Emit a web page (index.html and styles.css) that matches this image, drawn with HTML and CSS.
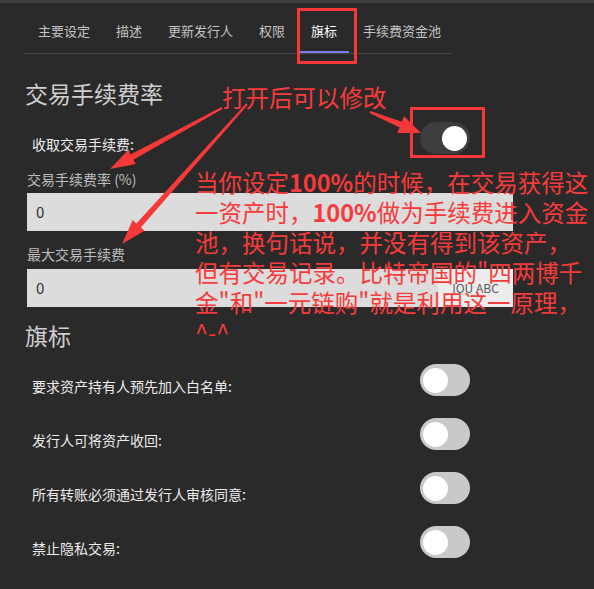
FILE: index.html
```html
<!DOCTYPE html>
<html lang="zh-CN">
<head>
    <meta charset="UTF-8">
    <title>资产设定 - 旗标</title>
    <link rel="stylesheet" href="styles.css">
</head>
<body>
    <div class="top-strip"></div>

    <div class="page">
        <!-- Tabs -->
        <div class="tabs">
            <span class="tab">主要设定</span>
            <span class="tab">描述</span>
            <span class="tab">更新发行人</span>
            <span class="tab">权限</span>
            <span class="tab active">旗标</span>
            <span class="tab">手续费资金池</span>
        </div>

        <!-- Transfer fee -->
        <h2 class="section-title">交易手续费率</h2>
        <div class="switch-row">
            <span class="switch-label">收取交易手续费:</span>
            <span class="switch on"><span class="knob"></span></span>
        </div>

        <label class="field-label first">交易手续费率 (%)</label>
        <div class="input-group">
            <div class="input-field">0</div>
        </div>

        <label class="field-label">最大交易手续费</label>
        <div class="input-group">
            <div class="input-field">0</div>
            <div class="input-addon">IOU ABC</div>
        </div>

        <!-- Flags -->
        <h2 class="section-title flags">旗标</h2>
        <div class="flag-list">
            <div class="switch-row">
                <span class="switch-label">要求资产持有人预先加入白名单:</span>
                <span class="switch"><span class="knob"></span></span>
            </div>
            <div class="switch-row">
                <span class="switch-label">发行人可将资产收回:</span>
                <span class="switch"><span class="knob"></span></span>
            </div>
            <div class="switch-row">
                <span class="switch-label">所有转账必须通过发行人审核同意:</span>
                <span class="switch"><span class="knob"></span></span>
            </div>
            <div class="switch-row">
                <span class="switch-label">禁止隐私交易:</span>
                <span class="switch"><span class="knob"></span></span>
            </div>
        </div>
    </div>

    <!-- Annotations drawn over the screenshot -->
    <div class="mark-box tab-mark"></div>
    <div class="mark-box switch-mark"></div>
    <div class="note note-open">打开后可以修改</div>
    <div class="note note-explain">当你设定<b>100%</b>的时候，在交易获得这<br>一资产时，<b>100%</b>做为手续费进入资金<br>池，换句话说，并没有得到该资产，<br>但有交易记录。比特帝国的"四两博千<br>金"和"一元链购"就是利用这一原理，<br>^-^</div>

    <svg class="arrows" width="594" height="589" viewBox="0 0 594 589">
        <polygon points="221.5,107.1 130.5,154.4 128.1,150.0 110,169 135.8,164.1 133.4,159.7 222.5,108.9"/>
        <polygon points="246.3,103.3 136.4,223.4 132.7,220.0 122,244 144.6,230.7 140.9,227.4 247.8,104.7"/>
        <polygon points="369.6,112.9 399.6,127.4 397.3,132.9 421,133 404.1,116.3 401.8,121.8 370.4,111.1"/>
    </svg>
</body>
</html>
```

FILE: styles.css
```css
:root {
    --bg: #2a2a2a;
    --mark-red: #f53838;
    --accent: #7d7bf0;
}

body {
    margin: 0;
    background: var(--bg);
    color: #e6e6e6;
    font-family: "Noto Sans CJK SC", "Noto Sans", sans-serif;
    font-size: 14px;
    width: 594px;
    height: 589px;
    overflow: hidden;
    position: relative;
}

.top-strip {
    height: 3px;
    background: #404040;
}

.page {
    padding: 0 81px 0 27px;
}

/* Tabs */
.tabs {
    display: flex;
    margin: 0 0 0 -4px;
    padding: 18px 0 0 2px;
    width: 427px;
    border-bottom: 1px solid #474747;
    white-space: nowrap;
}

.tab {
    flex-shrink: 0;
    padding: 0 13px 10px;
    font-size: 13px;
    line-height: 20px;
    color: #c4c4c4;
    border-bottom: 2px solid transparent;
}

.tab.active {
    padding: 0 12px 10px;
    margin: 0 1px 0 1px;
    color: #ffffff;
    border-bottom-color: var(--accent);
}

/* Sections */
.section-title {
    margin: 24px 0 0 -2px;
    font-size: 23px;
    line-height: 30px;
    font-weight: normal;
    color: #cfcfcf;
}

.section-title.flags {
    margin-top: 13px;
}

.switch-row {
    display: flex;
    justify-content: space-between;
    align-items: flex-end;
    width: 438px;
    margin-top: 14px;
    padding-left: 5px;
}

.switch-label {
    line-height: 20px;
    color: #ececec;
}

.switch {
    position: relative;
    width: 50px;
    height: 32px;
    border-radius: 16px;
    background: #c9c9c9;
}

.switch .knob {
    position: absolute;
    top: 4px;
    left: 3px;
    width: 25px;
    height: 25px;
    border-radius: 50%;
    background: #ffffff;
}

.switch.on {
    background: #3e3e3e;
}

.switch.on .knob {
    left: 22px;
}

.flag-list .switch-row {
    margin-top: 22px;
}

.flag-list .switch-row:first-child {
    margin-top: 14px;
}

/* Inputs */
.field-label {
    display: block;
    margin-top: 13px;
    margin-bottom: 5px;
    line-height: 20px;
    color: #bdbdbd;
}

.field-label.first {
    margin-top: 15px;
    margin-bottom: 4px;
}

.input-group {
    display: flex;
    width: 486px;
    height: 38px;
}

.input-field {
    flex: 1;
    padding-left: 9px;
    background: #dcdcdc;
    color: #333333;
    font-size: 15px;
    line-height: 38px;
}

.input-addon {
    width: 75px;
    background: #ececec;
    color: #5a5a5a;
    font-size: 12px;
    line-height: 38px;
    text-align: center;
}

/* Annotations */
.mark-box {
    position: absolute;
    border: 3px solid var(--mark-red);
}

.tab-mark {
    left: 297px;
    top: 8px;
    width: 54px;
    height: 50px;
}

.switch-mark {
    left: 410px;
    top: 107px;
    width: 69px;
    height: 45px;
}

.note {
    position: absolute;
    color: #f73b3b;
    font-size: 23.5px;
    line-height: 30px;
    white-space: nowrap;
}

.note b {
    font-weight: bold;
}

.note-open {
    left: 222px;
    top: 82px;
}

.note-explain {
    left: 195px;
    top: 167px;
}

.arrows {
    position: absolute;
    left: 0;
    top: 0;
    pointer-events: none;
}

.arrows polygon {
    fill: var(--mark-red);
}
```
